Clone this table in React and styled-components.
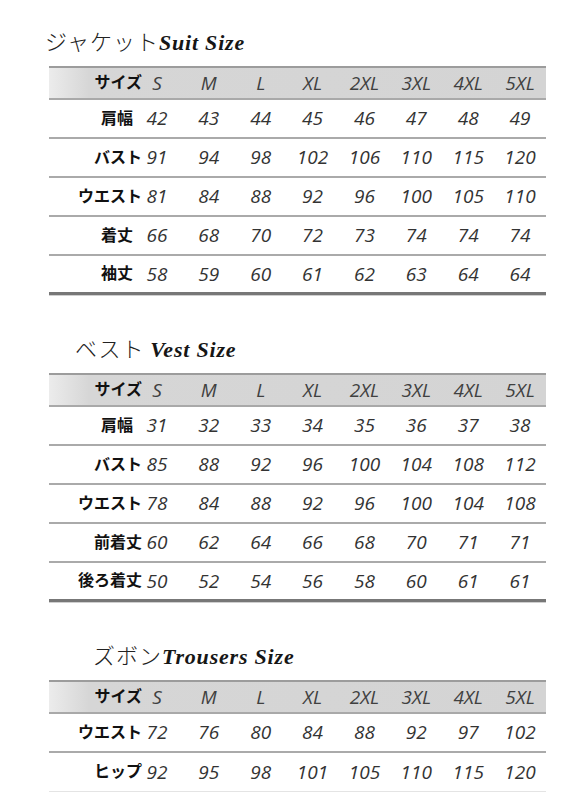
import React from 'react';
import styled, { createGlobalStyle } from 'styled-components';

const GlobalStyle = createGlobalStyle`
  html, body {
    margin: 0;
    padding: 0;
    background: #ffffff;
  }
`;

const Page = styled.div`
  width: 570px;
  min-height: 806px;
  box-sizing: border-box;
  padding: 26px 24px 0 49px;
  background: #fff;
`;

const Section = styled.section`
  & + & {
    margin-top: 38px;
  }
`;

const Title = styled.h2`
  margin: 0 0 12px ${(p) => p.$indent}px;
  height: 28px;
  line-height: 28px;
  font-weight: 400;
  white-space: nowrap;
  color: #1a1a1a;
`;

const TitleJa = styled.span`
  font-family: "Noto Sans CJK JP", sans-serif;
  font-weight: 300;
  font-size: 22px;
  letter-spacing: 1px;
  color: #222;
`;

const TitleEn = styled.span`
  font-family: "Liberation Serif", serif;
  font-style: italic;
  font-weight: 700;
  font-size: 22px;
  letter-spacing: 0.8px;
  color: #161616;
`;

const Row = styled.div`
  display: grid;
  grid-template-columns: 82px repeat(8, 1fr);
  align-items: center;
  width: 497px;
  height: ${(p) => (p.$head ? 34 : 39)}px;
  box-sizing: border-box;
`;

const HeadRow = styled(Row)`
  background: linear-gradient(to right, #ececec 0px, #d6d6d6 40px, #d4d4d4 100%);
  border-top: 2px solid #9c9c9c;
  border-bottom: 2px solid #a9a9a9;
`;

const BodyRow = styled(Row)`
  border-bottom: ${(p) =>
    p.$last === 'thick'
      ? '3px solid #777777'
      : p.$last === 'soft'
      ? '1px solid #e4e4e4'
      : '2px solid #aaaaaa'};
  box-shadow: ${(p) => (p.$last === 'thick' ? '0 1px 0 #cfcfcf' : 'none')};
`;

const Label = styled.div`
  justify-self: end;
  margin-right: ${(p) => (p.$short ? -2 : -11)}px;
  font-family: "Noto Sans CJK JP", sans-serif;
  font-weight: 700;
  font-size: 16px;
  line-height: 1;
  color: #111;
  white-space: nowrap;
  position: relative;
  top: -2px;
`;

const Cell = styled.div`
  text-align: center;
  font-family: "Open Sans", "Liberation Sans", sans-serif;
  font-style: italic;
  font-size: 19px;
  line-height: 1;
  color: ${(p) => (p.$head ? '#404040' : '#333333')};
`;

const sizes = ['S', 'M', 'L', 'XL', '2XL', '3XL', '4XL', '5XL'];

const tables = [
  {
    ja: 'ジャケット',
    en: 'Suit Size',
    indent: -4,
    end: 'thick',
    rows: [
      ['肩幅', [42, 43, 44, 45, 46, 47, 48, 49]],
      ['バスト', [91, 94, 98, 102, 106, 110, 115, 120]],
      ['ウエスト', [81, 84, 88, 92, 96, 100, 105, 110]],
      ['着丈', [66, 68, 70, 72, 73, 74, 74, 74]],
      ['袖丈', [58, 59, 60, 61, 62, 63, 64, 64]],
    ],
  },
  {
    ja: 'ベスト ',
    en: 'Vest Size',
    indent: 26,
    end: 'thick',
    rows: [
      ['肩幅', [31, 32, 33, 34, 35, 36, 37, 38]],
      ['バスト', [85, 88, 92, 96, 100, 104, 108, 112]],
      ['ウエスト', [78, 84, 88, 92, 96, 100, 104, 108]],
      ['前着丈', [60, 62, 64, 66, 68, 70, 71, 71]],
      ['後ろ着丈', [50, 52, 54, 56, 58, 60, 61, 61]],
    ],
  },
  {
    ja: 'ズボン',
    en: 'Trousers Size',
    indent: 44,
    end: 'soft',
    rows: [
      ['ウエスト', [72, 76, 80, 84, 88, 92, 97, 102]],
      ['ヒップ', [92, 95, 98, 101, 105, 110, 115, 120]],
    ],
  },
];

const SizeTable = ({ ja, en, indent, end, rows }) => (
  <Section>
    <Title $indent={indent}>
      <TitleJa>{ja}</TitleJa>
      <TitleEn>{en}</TitleEn>
    </Title>
    <HeadRow $head>
      <Label>サイズ</Label>
      {sizes.map((s) => (
        <Cell key={s} $head>
          {s}
        </Cell>
      ))}
    </HeadRow>
    {rows.map(([name, values], i) => (
      <BodyRow key={name} $last={i === rows.length - 1 ? end : undefined}>
        <Label $short={name.length === 2}>{name}</Label>
        {values.map((v, j) => (
          <Cell key={j}>{v}</Cell>
        ))}
      </BodyRow>
    ))}
  </Section>
);

const App = () => (
  <Page>
    <GlobalStyle />
    {tables.map((t) => (
      <SizeTable key={t.en} {...t} />
    ))}
  </Page>
);

export default App;
